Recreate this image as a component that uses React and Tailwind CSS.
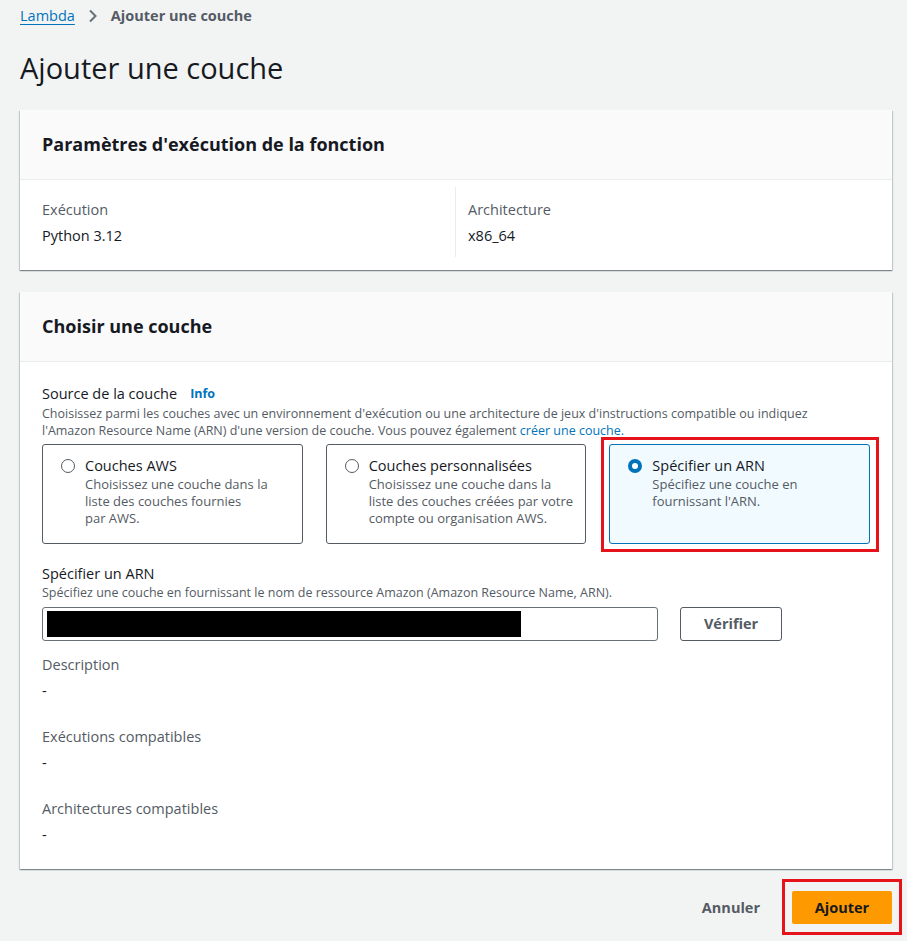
import React from "react";

const card = "bg-white shadow-[0_1px_1px_0_rgba(0,28,36,0.3),1px_1px_1px_0_rgba(0,28,36,0.15),-1px_1px_1px_0_rgba(0,28,36,0.15)]";

function Tile({ title, desc, selected }) {
  return (
    <div
      className={
        selected
          ? "relative h-[100px] rounded-[3px] border border-[#0073bb] bg-[#f1faff] pl-[18px] pr-[10px] pt-[11px]"
          : "relative h-[100px] rounded-[3px] border border-[#545b64] bg-white pl-[18px] pr-[10px] pt-[11px]"
      }
    >
      {selected && (
        <div className="pointer-events-none absolute -top-[8px] -bottom-[9px] -left-[9px] -right-[10px] border-[3px] border-[#e7131a]" />
      )}
      <div className="flex gap-[10px]">
        {selected ? (
          <span className="mt-[3px] h-[14px] w-[14px] shrink-0 rounded-full border-[4px] border-[#0073bb] bg-white" />
        ) : (
          <span className="mt-[3px] h-[14px] w-[14px] shrink-0 rounded-full border border-[#545b64] bg-white" />
        )}
        <div>
          <div className="text-[14.5px] leading-[20px] text-[#16191f]">{title}</div>
          <div className="text-[13px] leading-[17px] text-[#545b64]">{desc}</div>
        </div>
      </div>
    </div>
  );
}

function Field({ label, value }) {
  return (
    <div className="flex flex-col">
      <span className="text-[14.5px] leading-[20px] text-[#545b64]">{label}</span>
      <span className="mt-[6px] text-[14.5px] leading-[20px] text-[#16191f]">{value}</span>
    </div>
  );
}

export default function App() {
  return (
    <div className="min-h-[941px] bg-[#f2f3f3] pl-[20px] pr-[15px] font-['Open_Sans',sans-serif] text-[#16191f]">
      <nav className="flex items-center pt-[6px] text-[14.5px] leading-[20px]">
        <span className="text-[#0073bb] underline underline-offset-[3px]">Lambda</span>
        <svg className="mx-[12px]" width="12" height="14" viewBox="0 0 12 14">
          <path d="M3 1.5 L8.5 7 L3 12.5" fill="none" stroke="#687078" strokeWidth="2" />
        </svg>
        <span className="font-bold text-[#545b64]">Ajouter une couche</span>
      </nav>

      <h1 className="mt-[24px] text-[29px] leading-[36px] font-normal">Ajouter une couche</h1>

      <section className={`mt-[24px] ${card}`}>
        <div className="flex h-[70px] items-center border-b border-[#eaeded] bg-[#fafafa] px-[22px]">
          <h2 className="text-[18px] font-bold">Paramètres d'exécution de la fonction</h2>
        </div>
        <div className="grid grid-cols-2 px-[22px] pt-[7px] pb-[13px]">
          <div className="border-r border-[#eaeded] pt-[13px] pb-[11px]">
            <Field label="Exécution" value="Python 3.12" />
          </div>
          <div className="pl-[12px] pt-[13px] pb-[11px]">
            <Field label="Architecture" value="x86_64" />
          </div>
        </div>
      </section>

      <section className={`mt-[22px] ${card}`}>
        <div className="flex h-[70px] items-center border-b border-[#eaeded] bg-[#fafafa] px-[22px]">
          <h2 className="text-[18px] font-bold">Choisir une couche</h2>
        </div>
        <div className="px-[22px] pt-[22px] pb-[24px]">
          <div className="flex items-center gap-[13px] text-[14.5px] leading-[20px]">
            <span>Source de la couche</span>
            <span className="text-[12.5px] font-bold text-[#0073bb]">Info</span>
          </div>
          <p className="mt-[1px] max-w-[790px] text-[12.5px] leading-[17px] text-[#545b64]">
            Choisissez parmi les couches avec un environnement d'exécution ou une architecture de jeux d'instructions compatible ou indiquez l'Amazon Resource Name (ARN) d'une version de couche. Vous pouvez également{" "}
            <span className="text-[#0073bb]">créer une couche.</span>
          </p>
          <div className="mt-[5px] grid grid-cols-3 gap-[23px]">
            <Tile title="Couches AWS" desc={"Choisissez une couche dans la liste des couches fournies par\u00a0AWS."} />
            <Tile title="Couches personnalisées" desc="Choisissez une couche dans la liste des couches créées par votre compte ou organisation AWS." />
            <Tile selected title="Spécifier un ARN" desc="Spécifiez une couche en fournissant l'ARN." />
          </div>

          <div className="mt-[20px] text-[14.5px] leading-[20px]">Spécifier un ARN</div>
          <div className="text-[12.5px] leading-[17px] text-[#545b64]">
            Spécifiez une couche en fournissant le nom de ressource Amazon (Amazon Resource Name, ARN).
          </div>
          <div className="mt-[6px] flex items-center gap-[22px]">
            <div className="flex h-[34px] w-[616px] items-center rounded-[3px] border border-[#687078] px-[4px]">
              <div className="h-[26px] w-[474px] bg-black" />
            </div>
            <button className="h-[34px] w-[102px] rounded-[3px] border border-[#545b64] bg-white text-[14.5px] font-bold text-[#545b64]">
              Vérifier
            </button>
          </div>

          <div className="mt-[14px] flex flex-col gap-[26px]">
            <Field label="Description" value="-" />
            <Field label="Exécutions compatibles" value="-" />
            <Field label="Architectures compatibles" value="-" />
          </div>
        </div>
      </section>

      <div className="mt-[22px] flex items-center justify-end gap-[32px] pb-[17px]">
        <span className="text-[14.5px] font-bold text-[#545b64]">Annuler</span>
        <div className="relative">
          <div className="pointer-events-none absolute -top-[12px] -bottom-[11px] -left-[10px] -right-[10px] border-[3px] border-[#e7131a]" />
          <button className="h-[33px] w-[100px] rounded-[2px] bg-[#ff9900] text-[14.5px] font-bold text-[#16191f]">
            Ajouter
          </button>
        </div>
      </div>
    </div>
  );
}
